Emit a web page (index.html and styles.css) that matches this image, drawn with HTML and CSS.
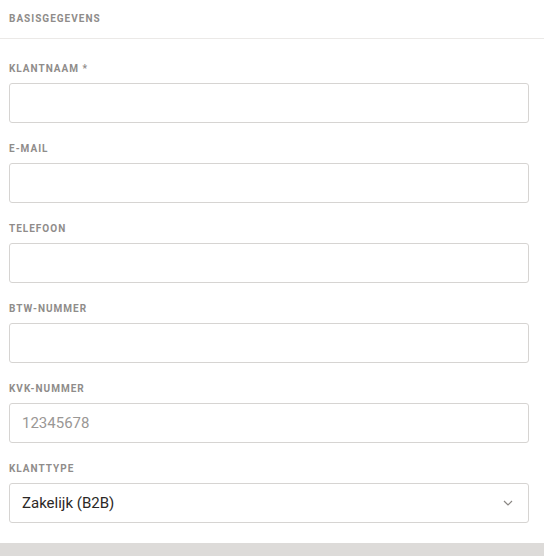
FILE: index.html
```html
<!DOCTYPE html>
<html lang="nl">
<head>
<meta charset="utf-8">
<link rel="stylesheet" href="styles.css">
</head>
<body>
<div class="panel">
  <div class="panel-header">Basisgegevens</div>
  <div class="form">
    <div class="field">
      <label class="label">Klantnaam *</label>
      <div class="input"></div>
    </div>
    <div class="field">
      <label class="label">E-mail</label>
      <div class="input"></div>
    </div>
    <div class="field">
      <label class="label">Telefoon</label>
      <div class="input"></div>
    </div>
    <div class="field">
      <label class="label">BTW-nummer</label>
      <div class="input"></div>
    </div>
    <div class="field">
      <label class="label">KvK-nummer</label>
      <div class="input placeholder">12345678</div>
    </div>
    <div class="field">
      <label class="label">Klanttype</label>
      <div class="input select">
        <span>Zakelijk (B2B)</span>
        <svg class="chevron" width="10" height="6" viewBox="0 0 10 6"><path d="M1 1l4 4 4-4" fill="none" stroke="#8a8683" stroke-width="1.2"/></svg>
      </div>
    </div>
  </div>
</div>
<div class="footer-band"></div>
</body>
</html>
```
FILE: styles.css
```css
html, body {
  margin: 0;
  padding: 0;
  background: #fff;
  font-family: Roboto, "Liberation Sans", sans-serif;
}
.panel {
  background: #fff;
}
.panel-header {
  padding: 12px 9px 12px;
  line-height: 14px;
  font-size: 10px;
  font-weight: 700;
  letter-spacing: 0.1em;
  text-transform: uppercase;
  color: #8f8c8a;
  border-bottom: 1px solid #ebe9e7;
}
.form {
  padding: 23px 15px 20px 9px;
  display: flex;
  flex-direction: column;
  gap: 19px;
}
.field {
  display: flex;
  flex-direction: column;
  gap: 7px;
}
.label {
  font-size: 10px;
  line-height: 14px;
  font-weight: 700;
  letter-spacing: 0.1em;
  text-transform: uppercase;
  color: #8f8c8a;
}
.input {
  box-sizing: border-box;
  height: 40px;
  border: 1px solid #d6d4d2;
  border-radius: 3px;
  padding: 0 12px;
  display: flex;
  align-items: center;
  font-size: 15px;
  color: #2b2826;
}
.placeholder {
  color: #9a9795;
}
.select {
  justify-content: space-between;
  padding-right: 15px;
}
.footer-band {
  height: 13px;
  background: #dddbd9;
}
```
